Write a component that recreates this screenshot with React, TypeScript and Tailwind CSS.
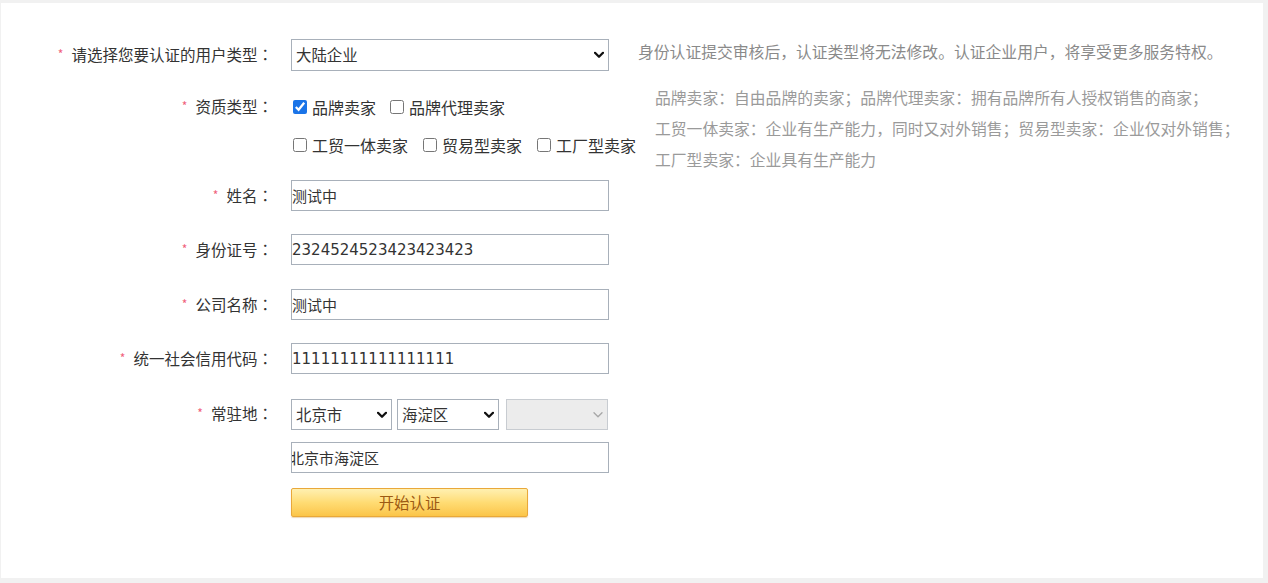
import React from 'react'

const HINTS = [
  '品牌卖家：自由品牌的卖家；品牌代理卖家：拥有品牌所有人授权销售的商家；',
  '工贸一体卖家：企业有生产能力，同时又对外销售；贸易型卖家：企业仅对外销售；',
  '工厂型卖家：企业具有生产能力',
]

function Label({ text, className = '' }: { text: string; className?: string }) {
  return (
    <div className={`w-[272px] shrink-0 flex items-center justify-end text-[15.5px] text-[#333] whitespace-nowrap ${className}`}>
      <span className="text-[12px] text-[#f0607a] mr-[8px] -mt-[2px]">*</span>
      <span>{text}</span>
      <span className="font-['Noto_Sans_CJK_TC',sans-serif]">：</span>
    </div>
  )
}

function Chevron({ disabled = false }: { disabled?: boolean }) {
  return (
    <svg
      width="10"
      height="7"
      viewBox="0 0 10 7"
      className="absolute right-[5px] top-1/2 -translate-y-1/2 pointer-events-none"
    >
      <path
        d="M1 1.3 L5 5.3 L9 1.3"
        fill="none"
        stroke={disabled ? '#a8a8a8' : '#111'}
        strokeWidth={disabled ? 1.4 : 2.3}
        strokeLinecap="round"
        strokeLinejoin="round"
      />
    </svg>
  )
}

function Select({ value, className = '', disabled = false }: { value?: string; className?: string; disabled?: boolean }) {
  return (
    <div className={`relative h-[31px] ${className}`}>
      <select
        disabled={disabled}
        defaultValue={value ?? ''}
        className={`appearance-none w-full h-full border pl-[4px] text-[15.4px] text-[#333] outline-none rounded-none ${
          disabled ? 'bg-[#ececec] border-[#c8ccd1]' : 'bg-white border-[#a8b0ba]'
        }`}
      >
        <option value={value ?? ''}>{value ?? ''}</option>
      </select>
      <Chevron disabled={disabled} />
    </div>
  )
}

function Check({ label, checked = false }: { label: string; checked?: boolean }) {
  return (
    <label className="flex items-center gap-[5px] text-[16px] text-[#333] whitespace-nowrap">
      <input type="checkbox" defaultChecked={checked} className="m-0 w-[14px] h-[14px] accent-[#1a74e8]" />
      <span>{label}</span>
    </label>
  )
}

function TextInput({ value, className = '' }: { value: string; className?: string }) {
  return (
    <input
      type="text"
      defaultValue={value}
      className={`w-[318px] h-[31px] border border-[#a8b0ba] px-0 text-[15px] text-[#333] outline-none font-['DejaVu_Sans','Noto_Sans_CJK_SC',sans-serif] ${className}`}
    />
  )
}

export default function App() {
  return (
    <div className="h-[583px] bg-[#f1f1f1] pt-[3px] pl-px pr-[5px] pb-[5px] font-['Noto_Sans_CJK_SC',sans-serif]">
      <div className="h-full bg-white flex">
        {/* 表单 */}
        <div className="w-[637px] shrink-0 pt-[36px] flex flex-col">
          <div className="flex h-[32px]">
            <Label text="请选择您要认证的用户类型" />
            <Select value="大陆企业" className="ml-[18px] w-[318px] !h-[32px]" />
          </div>

          <div className="flex mt-[20px]">
            <Label text="资质类型" className="h-[31px]" />
            <div className="ml-[20px] flex flex-col gap-[7px]">
              <div className="h-[31px] flex items-center gap-[14px]">
                <Check label="品牌卖家" checked />
                <Check label="品牌代理卖家" />
              </div>
              <div className="h-[31px] flex items-center gap-[15px]">
                <Check label="工贸一体卖家" />
                <Check label="贸易型卖家" />
                <Check label="工厂型卖家" />
              </div>
            </div>
          </div>

          <div className="flex mt-[20px] h-[31px]">
            <Label text="姓名" />
            <TextInput value="测试中" className="ml-[18px]" />
          </div>
          <div className="flex mt-[23px] h-[31px]">
            <Label text="身份证号" />
            <TextInput value="2324524523423423423" className="ml-[18px]" />
          </div>
          <div className="flex mt-[24px] h-[31px]">
            <Label text="公司名称" />
            <TextInput value="测试中" className="ml-[18px]" />
          </div>
          <div className="flex mt-[23px] h-[31px]">
            <Label text="统一社会信用代码" />
            <TextInput value="11111111111111111" className="ml-[18px]" />
          </div>

          <div className="flex mt-[25px]">
            <Label text="常驻地" className="h-[29px] self-start" />
            <div className="ml-[18px] flex flex-col">
              <div className="flex">
                <Select value="北京市" className="w-[101px]" />
                <Select value="海淀区" className="ml-[5px] w-[102px]" />
                <Select disabled className="ml-[7px] w-[102px]" />
              </div>
              <TextInput value="北京市海淀区" className="mt-[12px] indent-[-3px]" />
              <button
                type="button"
                className="mt-[15px] w-[237px] h-[29px] rounded-[2px] border border-[#e9a83a] bg-gradient-to-b from-[#fff0b0] via-[#ffdc73] to-[#fbc548] text-[15.4px] text-[#9c5a14] shadow-[0_1px_1px_rgba(200,140,40,0.35)]"
              >
                开始认证
              </button>
            </div>
          </div>
        </div>

        {/* 说明 */}
        <div className="pt-[33px] whitespace-nowrap">
          <p className="text-[15.8px] leading-[31px] text-[#8a8a8a]">
            身份认证提交审核后，认证类型将无法修改。认证企业用户，将享受更多服务特权。
          </p>
          <ul className="mt-[15px] pl-[17px] text-[15.8px] leading-[31px] text-[#9a9a9a]">
            {HINTS.map((h) => (
              <li key={h}>{h}</li>
            ))}
          </ul>
        </div>
      </div>
    </div>
  )
}
